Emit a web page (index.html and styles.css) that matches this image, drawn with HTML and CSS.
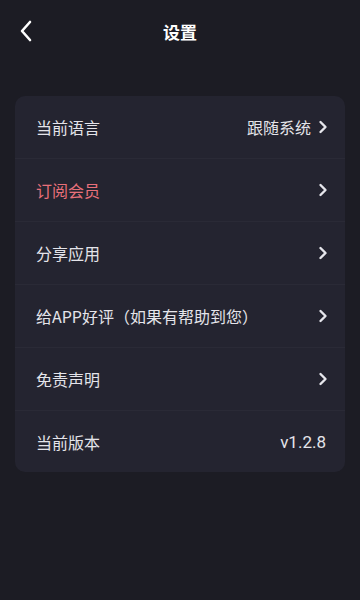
FILE: index.html
```html
<!DOCTYPE html>
<html lang="zh-CN">
<head>
    <meta charset="UTF-8">
    <title>设置</title>
    <link rel="stylesheet" href="styles.css">
</head>
<body>
    <div class="header">
        <button class="back-btn">
            <svg width="14" height="22" viewBox="0 0 14 22"><path d="M11 2 L3 11 L11 20" fill="none" stroke="#fff" stroke-width="2.6" stroke-linecap="round" stroke-linejoin="round"/></svg>
        </button>
        <div class="title">设置</div>
    </div>

    <div class="settings-card">
        <div class="setting-row">
            <span class="label">当前语言</span>
            <span class="value">跟随系统</span>
            <svg class="arrow" width="10" height="14" viewBox="0 0 10 14"><path d="M2.5 2 L7.5 7 L2.5 12" fill="none" stroke="#e6e6ec" stroke-width="2.4" stroke-linecap="round" stroke-linejoin="round"/></svg>
        </div>
        <div class="setting-row">
            <span class="label vip">订阅会员</span>
            <svg class="arrow" width="10" height="14" viewBox="0 0 10 14"><path d="M2.5 2 L7.5 7 L2.5 12" fill="none" stroke="#e6e6ec" stroke-width="2.4" stroke-linecap="round" stroke-linejoin="round"/></svg>
        </div>
        <div class="setting-row">
            <span class="label">分享应用</span>
            <svg class="arrow" width="10" height="14" viewBox="0 0 10 14"><path d="M2.5 2 L7.5 7 L2.5 12" fill="none" stroke="#e6e6ec" stroke-width="2.4" stroke-linecap="round" stroke-linejoin="round"/></svg>
        </div>
        <div class="setting-row">
            <span class="label">给APP好评（如果有帮助到您）</span>
            <svg class="arrow" width="10" height="14" viewBox="0 0 10 14"><path d="M2.5 2 L7.5 7 L2.5 12" fill="none" stroke="#e6e6ec" stroke-width="2.4" stroke-linecap="round" stroke-linejoin="round"/></svg>
        </div>
        <div class="setting-row">
            <span class="label">免责声明</span>
            <svg class="arrow" width="10" height="14" viewBox="0 0 10 14"><path d="M2.5 2 L7.5 7 L2.5 12" fill="none" stroke="#e6e6ec" stroke-width="2.4" stroke-linecap="round" stroke-linejoin="round"/></svg>
        </div>
        <div class="setting-row">
            <span class="label">当前版本</span>
            <span class="value version">v1.2.8</span>
        </div>
    </div>
</body>
</html>
```

FILE: styles.css
```css
body {
    margin: 0;
    min-height: 100vh;
    background-color: #1c1c24;
    color: #e4e4ea;
    font-family: "Noto Sans CJK SC", "Noto Sans", sans-serif;
}
.header {
    position: relative;
    height: 62px;
    display: flex;
    align-items: center;
    justify-content: center;
}
.back-btn {
    position: absolute;
    left: 15px;
    top: 20px;
    padding: 0;
    border: none;
    background: none;
    width: 22px;
    height: 22px;
    display: flex;
    align-items: center;
    justify-content: center;
}
.title {
    font-size: 17px;
    font-weight: bold;
    color: #fff;
}
.settings-card {
    margin: 34px 15px 0;
    background-color: #242430;
    border-radius: 10px;
    overflow: hidden;
}
.setting-row {
    display: flex;
    align-items: center;
    height: 62px;
    padding: 0 17px 0 21px;
    border-bottom: 1px solid #2a2a36;
    font-size: 16px;
}
.setting-row:last-child {
    border-bottom: none;
    height: 61px;
}
.label {
    flex: 1;
}
.vip {
    color: #e8707a;
}
.value {
    margin-right: 7px;
}
.version {
    margin-right: 2px;
    font-family: "Roboto", sans-serif;
    font-size: 17px;
}
.arrow {
    display: block;
}
```
